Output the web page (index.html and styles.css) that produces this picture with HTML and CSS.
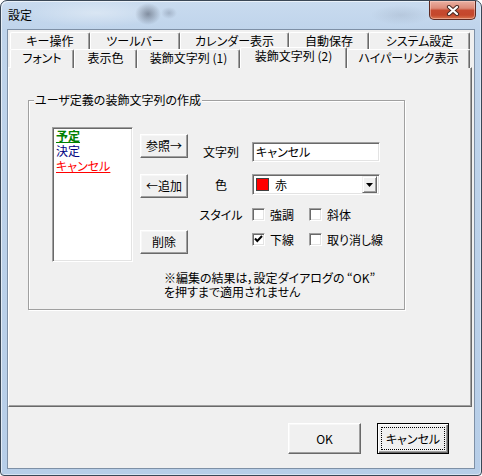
FILE: index.html
```html
<!DOCTYPE html>
<html lang="ja">
<head>
<meta charset="utf-8">
<title>設定</title>
<link rel="stylesheet" href="styles.css">
</head>
<body>
<div class="window">
  <div class="titlebar">
    <span class="title">設定</span>
    <div class="close-btn">
      <svg width="14" height="11" viewBox="0 0 14 11"><path d="M3 2 L11 9 M11 2 L3 9" stroke="#4a2a24" stroke-width="4.2" stroke-linecap="round"/><path d="M3 2 L11 9 M11 2 L3 9" stroke="#fff" stroke-width="2.2" stroke-linecap="round"/></svg>
    </div>
  </div>
  <div class="client">
    <div class="tabctl">
      <div class="tabrow row-back">
        <div class="tab">キー操作</div>
        <div class="tab">ツールバー</div>
        <div class="tab">カレンダー表示</div>
        <div class="tab">自動保存</div>
        <div class="tab">システム設定</div>
      </div>
      <div class="tabrow row-front">
        <div class="tab">フォント</div>
        <div class="tab">表示色</div>
        <div class="tab">装飾文字列 (1)</div>
        <div class="tab active">装飾文字列 (2)</div>
        <div class="tab">ハイパーリンク表示</div>
      </div>
      <div class="panel">
        <div class="group">
          <span class="group-title">ユーザ定義の装飾文字列の作成</span>
          <div class="group-body">
            <div class="listbox">
              <div class="item item-plan">予定</div>
              <div class="item item-decide">決定</div>
              <div class="item item-cancel">キャンセル</div>
            </div>
            <div class="btncol">
              <button class="btn btn-sm">参照→</button>
              <button class="btn btn-sm btn-add">←追加</button>
              <button class="btn btn-sm btn-del">削除</button>
            </div>
            <div class="form">
              <span class="lbl">文字列</span>
              <div class="textbox">キャンセル</div>
              <span class="lbl">色</span>
              <div class="combo">
                <span class="swatch"></span>
                <span class="combo-text">赤</span>
                <span class="dd"><svg width="7" height="4" viewBox="0 0 7 4"><path d="M0 0H7L3.5 4Z" fill="#000"/></svg></span>
              </div>
              <span class="lbl">スタイル</span>
              <div class="checks">
                <span class="chk"><span class="box"></span>強調</span>
                <span class="chk"><span class="box"></span>斜体</span>
              </div>
              <span></span>
              <div class="checks">
                <span class="chk"><span class="box"><svg width="11" height="11" viewBox="0 0 11 11"><path d="M2 4.5 L4.3 7 L9 2" fill="none" stroke="#000" stroke-width="2"/></svg></span>下線</span>
                <span class="chk"><span class="box"></span>取り消し線</span>
              </div>
            </div>
          </div>
          <p class="note">※編集の結果は，設定ダイアログの “OK”<br>を押すまで適用されません</p>
        </div>
      </div>
    </div>
    <div class="footer">
      <button class="btn btn-lg btn-ok">OK</button>
      <button class="btn btn-lg btn-default">キャンセル</button>
    </div>
  </div>
</div>
</body>
</html>
```
FILE: styles.css
```css
* { box-sizing: border-box; }
html, body { margin: 0; padding: 0; }
body {
  width: 482px;
  height: 476px;
  overflow: hidden;
  font-family: "Noto Sans CJK JP", "Noto Sans", sans-serif;
  font-size: 12px;
  line-height: 14px;
  color: #000;
  font-feature-settings: "palt";
  background: #fff;
}

.window {
  width: 482px;
  height: 476px;
  border: 1px solid #3a4756;
  border-radius: 7px 7px 4px 4px;
  display: flex;
  flex-direction: column;
  background:
    radial-gradient(ellipse 13px 11px at 147px 13px, rgba(70,78,95,.55), rgba(70,78,95,0)),
    radial-gradient(ellipse 8px 6px at 168px 12px, rgba(90,100,120,.3), rgba(90,100,120,0)),
    radial-gradient(ellipse 70px 14px at 95px 12px, rgba(255,255,255,.35), rgba(255,255,255,0)),
    radial-gradient(ellipse 30px 10px at 400px 14px, rgba(120,130,150,.18), rgba(120,130,150,0)),
    linear-gradient(180deg, #c9dbef 0, #bfd4eb 29px, #b7cee8 100%);
  box-shadow: inset 1px 1px 0 rgba(255,255,255,.6), inset -1px -1px 0 rgba(255,255,255,.45);
}

.titlebar {
  height: 28px;
  display: flex;
  justify-content: space-between;
  align-items: flex-start;
  padding: 0 5px 0 7px;
}
.title { margin-top: 7px; line-height: 14px; color: #000; }
.close-btn {
  width: 47px;
  height: 19px;
  border: 1px solid #5d2a22;
  border-top: none;
  border-radius: 0 0 5px 5px;
  background: linear-gradient(180deg, #eab0a2 0%, #dc8a78 40%, #c64a30 52%, #c4472c 78%, #d9764f 100%);
  box-shadow: inset 0 0 0 1px rgba(255,220,210,.45);
  display: flex;
  align-items: center;
  justify-content: center;
}

.client {
  margin: 0 6px;
  height: 440px;
  border: 1px solid #7e90a6;
  background: #f0f0f0;
  display: flex;
  flex-direction: column;
}

.tabctl { padding-top: 2px; }
.tabrow { display: grid; margin-left: 2px; }
.row-back { grid-template-columns: 80px 90px 109px 80px 101px; height: 17px; }
.row-front { grid-template-columns: 64px 63px 103px 107px 123px; height: 18px; }
.tab {
  background: #f0f0f0;
  border-top: 1px solid #fff;
  border-left: 1px solid #fff;
  border-right: 1px solid #696969;
  border-radius: 2px 2px 0 0;
  box-shadow: inset -1px 0 0 #a0a0a0;
  text-align: center;
  line-height: 15px;
  white-space: nowrap;
}
.row-front .tab { line-height: 16px; }
.tab.active {
  position: relative;
  z-index: 1;
  margin-top: -2px;
  height: 21px;
  line-height: 15px;
}

.panel {
  width: 464px;
  height: 340px;
  border: 1px solid;
  border-color: #fff #696969 #696969 #fff;
  box-shadow: inset -1px -1px 0 #a0a0a0;
  padding: 32px 0 0 19px;
}

.group {
  position: relative;
  width: 377px;
  border: 1px solid #a0a0a0;
  box-shadow: inset 1px 1px 0 #fff, 1px 1px 0 #fff;
  padding: 26px 0 10px 23px;
}
.group-title {
  position: absolute;
  top: -8px;
  left: 5px;
  padding: 0 1px;
  background: #f0f0f0;
  line-height: 14px;
  white-space: nowrap;
}
.group-body { display: flex; align-items: flex-start; }

.sunken {
  border: 1px solid;
}
.listbox, .textbox, .combo, .box {
  background: #fff;
  border: 1px solid;
  border-color: #a0a0a0 #fff #fff #a0a0a0;
  box-shadow: inset 1px 1px 0 #696969, inset -1px -1px 0 #e3e3e3;
}
.listbox {
  width: 81px;
  height: 135px;
  padding: 0 0 0 3px;
}
.item { line-height: 15px; white-space: nowrap; }
.item-plan { color: #008000; font-weight: bold; text-decoration: underline; }
.item-decide { color: #000080; }
.item-cancel { color: #ff0000; text-decoration: underline; }

.btn {
  font: inherit;
  font-feature-settings: "palt";
  color: #000;
  background: #f0f0f0;
  border: 1px solid;
  border-color: #fff #696969 #696969 #fff;
  box-shadow: inset -1px -1px 0 #a0a0a0, inset 1px 1px 0 #f7f7f7;
  padding: 0;
  white-space: nowrap;
}
.btncol { display: flex; flex-direction: column; margin: 7px 0 0 7px; width: 48px; }
.btn-sm { height: 24px; }
.btn-add { margin-top: 16px; }
.btn-del { margin-top: 32px; }

.form {
  margin: 15px 0 0 9px;
  display: grid;
  grid-template-columns: 48px 128px;
  grid-template-rows: 20px 22px 13px 13px;
  column-gap: 7px;
  row-gap: 12px;
}
.lbl { justify-self: center; align-self: center; white-space: nowrap; line-height: 14px; }
.textbox { height: 20px; padding: 0 3px; line-height: 18px; white-space: nowrap; }
.combo {
  height: 21px;
  display: flex;
  align-items: center;
  padding: 0 2px 0 3px;
}
.swatch {
  width: 13px;
  height: 13px;
  background: #ff0000;
  border: 1px solid #404040;
}
.combo-text { margin-left: 6px; line-height: 14px; }
.dd {
  margin-left: auto;
  width: 15px;
  height: 17px;
  background: #f0f0f0;
  border: 1px solid;
  border-color: #f0f0f0 #696969 #696969 #f0f0f0;
  box-shadow: inset 1px 1px 0 #fff, inset -1px -1px 0 #a0a0a0;
  display: flex;
  align-items: center;
  justify-content: center;
}
.checks { display: grid; grid-template-columns: 57px auto; }
.chk { display: flex; align-items: center; gap: 5px; line-height: 13px; white-space: nowrap; }
.box {
  width: 13px;
  height: 13px;
  flex: none;
  display: flex;
  align-items: center;
  justify-content: center;
}

.note {
  margin: 9px 0 0 112px;
  line-height: 14px;
  white-space: nowrap;
}

.footer {
  display: flex;
  justify-content: flex-end;
  gap: 16px;
  padding: 16px 25px 0 0;
}
.btn-lg { height: 31px; width: 72px; }
.btn-ok { width: 73px; }
.btn-default {
  position: relative;
  border-color: #000;
  box-shadow: inset 1px 1px 0 #fff, inset -1px -1px 0 #696969, inset -2px -2px 0 #a0a0a0;
}
.btn-default::after {
  content: "";
  position: absolute;
  inset: 3px;
  border: 1px dotted #000;
}
```
